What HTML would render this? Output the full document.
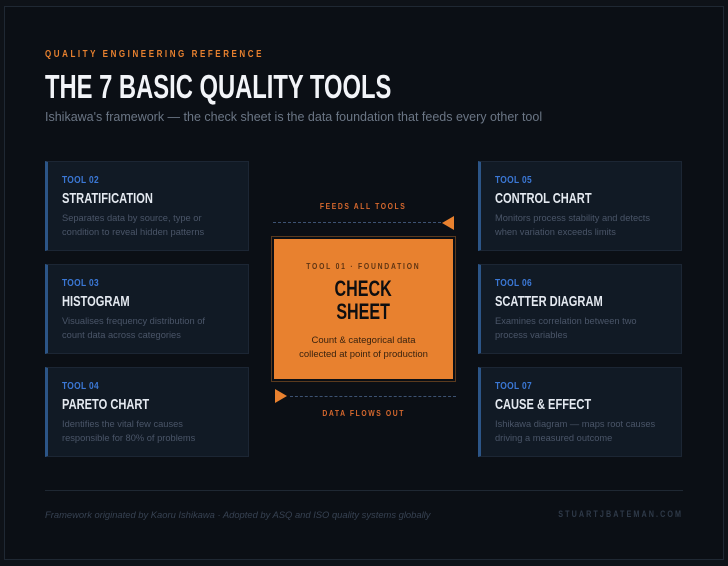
<!DOCTYPE html>
<html><head><style>
*{margin:0;padding:0;box-sizing:border-box}
body{width:728px;height:566px;background:#0e1218;font-family:"Liberation Sans",sans-serif;position:relative;overflow:hidden}
.frame{position:absolute;left:4px;top:6px;width:720px;height:554px;border:1px solid #1f2833;background:#0b0f15}
.n{font-weight:bold;display:inline-block;transform-origin:left center;white-space:nowrap}
.c{transform-origin:center center}
.a{position:absolute}
.card{position:absolute;width:204px;height:90px;background:#111a25;border:1px solid #1c2634;border-left:3px solid #2c5587}
.card .t{position:absolute;left:14px;top:12px;font-size:10.5px;color:#3b78d6;transform:scaleX(0.8);letter-spacing:0.4px}
.card .h{position:absolute;left:14px;top:28px;font-size:15px;color:#e4e9f0;transform:scaleX(0.74)}
.card .d{position:absolute;left:14px;top:49px;font-size:9.3px;line-height:14px;color:#4a5568;white-space:nowrap}
.dash{position:absolute;height:0;border-top:1px dashed #3d5272}
</style></head><body>
<div class="frame"></div>
<div class="a n" style="left:45px;top:49px;font-size:10px;color:#e8812f;letter-spacing:3.2px;transform:scaleX(0.8)">QUALITY ENGINEERING REFERENCE</div>
<div class="a n" style="left:45px;top:68px;font-size:33px;color:#f2f4f8;transform:scaleX(0.72)">THE 7 BASIC QUALITY TOOLS</div>
<div class="a" style="left:45px;top:110px;font-size:12.5px;color:#6b7685">Ishikawa's framework — the check sheet is the data foundation that feeds every other tool</div>

<div class="card" style="left:45px;top:161px"><div class="t n">TOOL 02</div><div class="h n">STRATIFICATION</div><div class="d">Separates data by source, type or<br>condition to reveal hidden patterns</div></div>
<div class="card" style="left:45px;top:264px"><div class="t n">TOOL 03</div><div class="h n">HISTOGRAM</div><div class="d">Visualises frequency distribution of<br>count data across categories</div></div>
<div class="card" style="left:45px;top:367px"><div class="t n">TOOL 04</div><div class="h n">PARETO CHART</div><div class="d">Identifies the vital few causes<br>responsible for 80% of problems</div></div>
<div class="card" style="left:478px;top:161px"><div class="t n">TOOL 05</div><div class="h n">CONTROL CHART</div><div class="d">Monitors process stability and detects<br>when variation exceeds limits</div></div>
<div class="card" style="left:478px;top:264px"><div class="t n">TOOL 06</div><div class="h n">SCATTER DIAGRAM</div><div class="d">Examines correlation between two<br>process variables</div></div>
<div class="card" style="left:478px;top:367px"><div class="t n">TOOL 07</div><div class="h n">CAUSE &amp; EFFECT</div><div class="d">Ishikawa diagram — maps root causes<br>driving a measured outcome</div></div>

<div class="a" style="left:271px;width:184px;top:196px;text-align:center"><span class="n c" style="font-size:8.5px;color:#d8692e;letter-spacing:2px;transform:scaleX(0.8)">FEEDS ALL TOOLS</span></div>
<div class="dash" style="left:273px;top:222px;width:168px"></div>
<svg class="a" style="left:442px;top:216px" width="12" height="14"><polygon points="12,0 12,14 0,7" fill="#e8812f"/></svg>
<div class="a" style="left:271px;top:236px;width:185px;height:146px;border:1px solid #5a3a1e;background:#0b0f15;padding:2px"><div style="width:100%;height:100%;background:#e8812f"></div></div>
<div class="a" style="left:271px;width:185px;top:256px;text-align:center"><span class="n c" style="font-size:8.5px;color:#5e3413;letter-spacing:2.2px;transform:scaleX(0.8)">TOOL 01 · FOUNDATION</span></div>
<div class="a" style="left:271px;width:185px;top:277px;text-align:center"><span class="n c" style="font-size:22px;line-height:23px;color:#0e0e10;transform:scaleX(0.73)">CHECK<br>SHEET</span></div>
<div class="a" style="left:271px;width:185px;top:334px;text-align:center;font-size:9.5px;line-height:14px;color:#3a230f">Count &amp; categorical data<br>collected at point of production</div>
<svg class="a" style="left:275px;top:389px" width="12" height="14"><polygon points="0,0 0,14 12,7" fill="#e8812f"/></svg>
<div class="dash" style="left:290px;top:396px;width:166px"></div>
<div class="a" style="left:271px;width:185px;top:403px;text-align:center"><span class="n c" style="font-size:8.5px;color:#d8692e;letter-spacing:2px;transform:scaleX(0.8)">DATA FLOWS OUT</span></div>

<div class="a" style="left:45px;top:490px;width:638px;height:1px;background:#1f2833"></div>
<div class="a" style="left:45px;top:509px;font-size:9.4px;font-style:italic;color:#374252">Framework originated by Kaoru Ishikawa · Adopted by ASQ and ISO quality systems globally</div>
<div class="a" style="left:483px;width:200px;top:504px;text-align:right"><span class="n" style="font-size:9px;color:#2f3a49;letter-spacing:2.6px;transform:scaleX(0.8);transform-origin:right center">STUARTJBATEMAN.COM</span></div>
</body></html>
